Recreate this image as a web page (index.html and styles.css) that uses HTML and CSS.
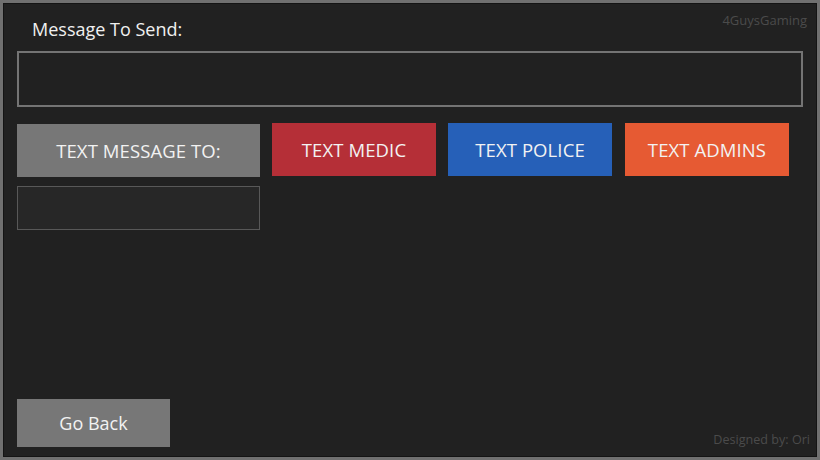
FILE: index.html
```html
<!DOCTYPE html>
<html>
<head>
<meta charset="utf-8">
<link rel="stylesheet" href="styles.css">
</head>
<body>
<div class="frame">
  <div class="brand">4GuysGaming</div>
  <div class="label">Message To Send:</div>
  <div class="msg-input"></div>
  <div class="row">
    <div class="col">
      <div class="btn gray wide">TEXT MESSAGE TO:</div>
      <div class="to-input"></div>
    </div>
    <div class="btn red">TEXT MEDIC</div>
    <div class="btn blue">TEXT POLICE</div>
    <div class="btn orange">TEXT ADMINS</div>
  </div>
  <div class="spacer"></div>
  <div class="footer">
    <div class="btn gray back">Go Back</div>
    <div class="credit">Designed by: Ori</div>
  </div>
</div>
</body>
</html>
```
FILE: styles.css
```css
* { box-sizing: border-box; }
html, body { margin: 0; padding: 0; background: #212121; }
body { font-family: "Open Sans", "Noto Sans", sans-serif; }
.frame {
  position: relative;
  width: 820px;
  height: 460px;
  border: 3px solid #707070;
  box-shadow: inset 0 0 0 1px #141414;
  background: #212121;
  padding: 14px 14px 10px 14px;
  display: flex;
  flex-direction: column;
}
.brand {
  position: absolute;
  top: 8px;
  right: 10px;
  font-size: 13px;
  color: #4b4b4b;
}
.label {
  color: #f0f0f0;
  font-size: 18px;
  line-height: 24px;
  margin-left: 15px;
}
.msg-input {
  margin-top: 10px;
  width: 786px;
  height: 56px;
  border: 2px solid #747474;
  background: #212121;
}
.row {
  margin-top: 16px;
  display: flex;
  gap: 12px;
  align-items: flex-start;
}
.col { display: flex; flex-direction: column; gap: 9px; }
.btn {
  display: flex;
  align-items: center;
  justify-content: center;
  color: #f2f2f2;
  font-size: 18.5px;
  letter-spacing: 0.1px;
  height: 53px;
  width: 164px;
}
.wide { width: 243px; margin-top: 1px; }
.gray { background: #777777; }
.red { background: #b52f37; }
.blue { background: #2660b8; }
.orange { background: #e65a33; margin-left: 1px; }
.to-input {
  width: 243px;
  height: 44px;
  background: #272727;
  border: 1px solid #585858;
}
.spacer { flex: 1; }
.footer {
  display: flex;
  justify-content: space-between;
  align-items: flex-end;
}
.back { width: 153px; height: 48px; font-size: 18px; letter-spacing: 0; }
.credit {
  font-size: 12.6px;
  color: #4b4b4b;
  margin-right: -7px;
  margin-bottom: -1px;
}
```
